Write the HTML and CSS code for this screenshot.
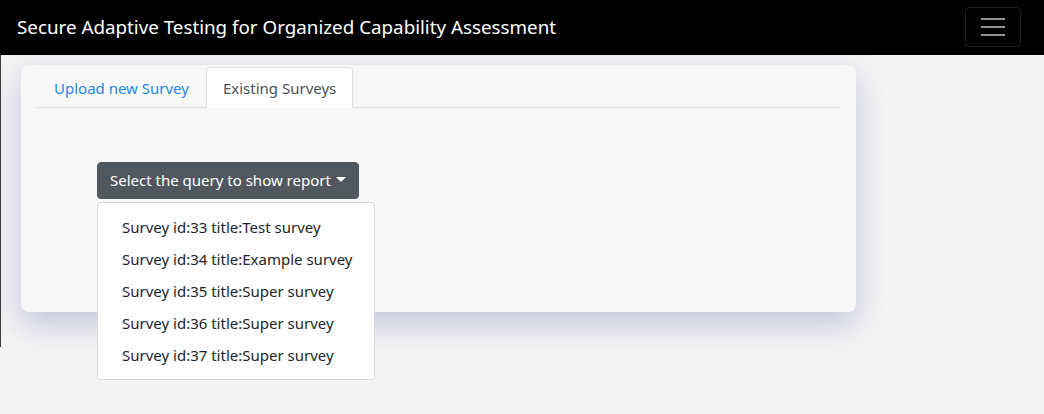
FILE: index.html
```html
<!DOCTYPE html>
<html lang="en">
<head>
<meta charset="utf-8">
<title>SATOCA</title>
<link rel="stylesheet" href="styles.css">
</head>
<body>
<nav class="navbar">
  <span class="brand">Secure Adaptive Testing for Organized Capability Assessment</span>
  <button class="toggler" aria-label="menu">
    <span class="bar"></span><span class="bar"></span><span class="bar"></span>
  </button>
</nav>
<main class="page">
  <section class="card">
    <ul class="tabs">
      <li><a class="tab" href="#">Upload new Survey</a></li>
      <li><a class="tab active" href="#">Existing Surveys</a></li>
    </ul>
    <div class="tab-body">
      <div class="dropdown">
        <button class="btn">Select the query to show report<span class="caret"></span></button>
        <div class="menu">
          <a class="item" href="#">Survey id:33 title:Test survey</a>
          <a class="item" href="#">Survey id:34 title:Example survey</a>
          <a class="item" href="#">Survey id:35 title:Super survey</a>
          <a class="item" href="#">Survey id:36 title:Super survey</a>
          <a class="item" href="#">Survey id:37 title:Super survey</a>
        </div>
      </div>
    </div>
  </section>
</main>
</body>
</html>
```
FILE: styles.css
```css
* { box-sizing: border-box; }
html, body { margin: 0; padding: 0; }
body {
  background: #f4f4f4;
  font-family: "Noto Sans", "Open Sans", sans-serif;
  font-size: 15px;
  line-height: 24px;
  color: #212529;
  height: 414px;
  overflow: hidden;
  position: relative;
}
body::before {
  content: "";
  position: absolute;
  left: 0;
  top: 55px;
  width: 1px;
  height: 292px;
  background: #3a3a3a;
}
.navbar {
  height: 55px;
  background: #000;
  display: flex;
  align-items: center;
  justify-content: space-between;
  padding: 0 23px 0 17px;
}
.brand {
  color: #fff;
  font-size: 18.8px;
  line-height: 30px;
  margin-top: -1px;
}
.toggler {
  width: 56px;
  height: 40px;
  background: transparent;
  border: 1px solid rgba(255,255,255,0.12);
  border-radius: 4px;
  display: flex;
  flex-direction: column;
  align-items: center;
  justify-content: center;
  gap: 6px;
  padding: 0;
  margin-top: -2px;
}
.toggler .bar {
  display: block;
  width: 24px;
  height: 2px;
  background: #8f8f8f;
}
.page {
  padding: 10px 0 0 21px;
}
.card {
  width: 835px;
  height: 247px;
  background: #f8f8f8;
  border-radius: 8px;
  box-shadow: 0 12px 32px rgba(70, 70, 160, 0.28);
  padding: 2px 16px 0 16px;
}
.tabs {
  list-style: none;
  margin: 0;
  padding: 0;
  display: flex;
  border-bottom: 1px solid #dee2e6;
}
.tabs li { margin-bottom: -1px; }
.tab {
  display: block;
  padding: 8px 16px 7px;
  border: 1px solid transparent;
  border-top-left-radius: 4px;
  border-top-right-radius: 4px;
  color: #1e88e5;
  text-decoration: none;
}
.tab.active {
  background: #fff;
  color: #495057;
  border-color: #dee2e6 #dee2e6 #fff;
}
.tab-body {
  padding: 54px 0 0 60px;
}
.dropdown {
  position: relative;
  display: inline-block;
}
.btn {
  font-family: inherit;
  font-size: 15px;
  line-height: 23px;
  color: #fff;
  background: #50575e;
  border: 1px solid #50575e;
  border-radius: 4px;
  padding: 6px 12px;
  display: flex;
  align-items: center;
}
.caret {
  display: inline-block;
  margin-left: 5px;
  border-top: 5px solid #fff;
  border-left: 5px solid transparent;
  border-right: 5px solid transparent;
  margin-top: -2px;
}
.menu {
  position: absolute;
  top: 100%;
  left: 0;
  margin-top: 3px;
  width: 278px;
  background: #fff;
  border: 1px solid rgba(0,0,0,0.15);
  border-radius: 4px;
  padding: 8px 0;
  z-index: 10;
}
.item {
  display: block;
  padding: 4px 24px;
  color: #212529;
  text-decoration: none;
  white-space: nowrap;
}
```
